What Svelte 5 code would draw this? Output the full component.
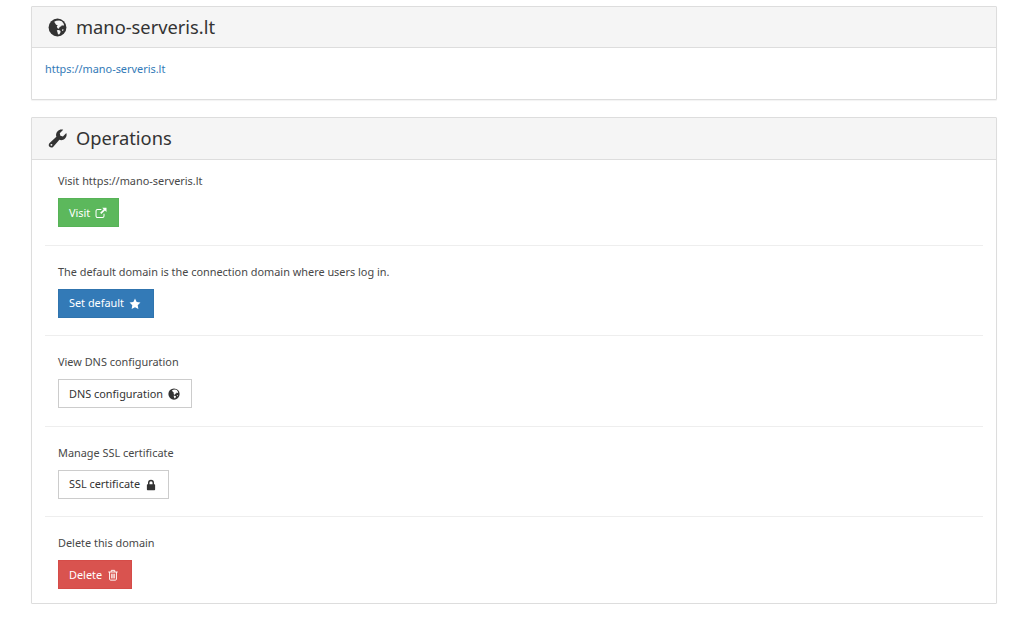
<script>
  const globe = "M8 0.500a7.500 7.500 0 1 0 0 15a7.500 7.500 0 0 0 0-15z";
</script>

{#snippet globeIcon(cls)}
  <svg class={cls} viewBox="0 0 16 16" aria-hidden="true">
    <path fill="currentColor" d={globe} />
    <path class="land" d="M5.200 3.200 7 2.300 9.400 2 11.600 2.700 13 4.400 13.600 6.200 12.400 6.600 11.800 5.800 11.200 7 9.800 7.600 9.200 9 8 8.600 7.400 7.200 8.200 6.200 6.800 5.600 6 4.400zM7.400 10.400 9.200 10.200 10.600 11 10.400 12.400 9.400 13.800 8.400 13.600 8 12zM12 9.400 13.200 9.600 12.600 11 11.800 10.600z" />
  </svg>
{/snippet}

<div class="page">
  <section class="panel">
    <header class="heading">
      {@render globeIcon("head-icon")}
      <h2>mano-serveris.lt</h2>
    </header>
    <div class="body first">
      <a href="#top">https://mano-serveris.lt</a>
    </div>
  </section>

  <section class="panel">
    <header class="heading tall">
      <svg class="head-icon wrench" viewBox="0 0 20 20" aria-hidden="true">
        <path fill="currentColor" d="M19.300 4.200c.7 2.100.2 4.300-1.400 5.900-1.600 1.600-3.900 2-5.900 1.300L5.600 18.600c-1.100 1.200-2.900 1.200-4 .1s-1.100-2.900.1-4L8.800 8.200C8.100 6.200 8.500 3.900 10.100 2.300 11.700.7 14 .2 16 .9L12.400 4.500l.6 2.700 2.700.6z" />
        <circle cx="3.600" cy="16.700" r="1" fill="#f5f5f5" />
      </svg>
      <h2>Operations</h2>
    </header>
    <div class="ops">
      <div class="op">
        <p>Visit https://mano-serveris.lt</p>
        <button class="btn green">Visit
          <svg viewBox="0 0 14 14" aria-hidden="true">
            <path fill="none" stroke="currentColor" stroke-width="1.200" d="M10.500 7.800v2.700a1.700 1.700 0 0 1-1.700 1.700H2.900a1.700 1.700 0 0 1-1.700-1.700V4.600a1.700 1.700 0 0 1 1.700-1.700h4.500" />
            <path fill="currentColor" d="M8.400.8H13.400V5.800L11.600 4 7.400 8.200 6 6.800 10.200 2.600z" />
          </svg>
        </button>
      </div>
      <div class="op">
        <p>The default domain is the connection domain where users log in.</p>
        <button class="btn blue">Set default
          <svg viewBox="0 0 14 14" aria-hidden="true">
            <path fill="currentColor" d="M7 .7l1.950 4 4.400.6-3.200 3.100.78 4.400L7 10.700l-3.930 2.100.78-4.400-3.200-3.100 4.400-.6z" />
          </svg>
        </button>
      </div>
      <div class="op">
        <p>View DNS configuration</p>
        <button class="btn plain">DNS configuration
          {@render globeIcon("")}
        </button>
      </div>
      <div class="op">
        <p>Manage SSL certificate</p>
        <button class="btn plain">SSL certificate
          <svg viewBox="0 0 14 14" aria-hidden="true">
            <path fill="currentColor" fill-rule="evenodd" d="M3.500 6V4.300a3.500 3.500 0 0 1 7 0V6h.5a.8.8 0 0 1 .8.8v5.400a.8.8 0 0 1-.8.8H3a.8.8 0 0 1-.8-.8V6.800A.8.8 0 0 1 3 6zM5.200 6h3.600V4.300a1.800 1.800 0 0 0-3.600 0z" />
          </svg>
        </button>
      </div>
      <div class="op">
        <p>Delete this domain</p>
        <button class="btn red">Delete
          <svg viewBox="0 0 14 14" aria-hidden="true">
            <path fill="none" stroke="currentColor" stroke-width="1.100" d="M1.500 3.500h11M3 3.500v8.300a1.200 1.200 0 0 0 1.200 1.200h5.600a1.200 1.200 0 0 0 1.200-1.200V3.500M5 3.300V1.600h4v1.700M5.500 5.500v5.500M7 5.500v5.500M8.500 5.500v5.500" />
          </svg>
        </button>
      </div>
    </div>
  </section>
</div>

<style>
  :global(body) {
    margin: 0;
    background: #fff;
    font-family: "Noto Sans", "Open Sans", sans-serif;
    font-size: 10.900px;
    color: #484848;
  }
  .page {
    padding: 6px 27px 0 31px;
    display: flex;
    flex-direction: column;
    gap: 17px;
  }
  .panel {
    border: 1px solid #ddd;
    border-radius: 1px;
    box-shadow: 0 1px 1px rgba(0, 0, 0, 0.05);
    background: #fff;
  }
  .heading {
    height: 41px;
    box-sizing: border-box;
    display: flex;
    align-items: center;
    gap: 9px;
    padding-left: 16px;
    background: #f5f5f5;
    border-bottom: 1px solid #ddd;
    color: #333;
  }
  .heading.tall {
    height: 42px;
  }
  h2 {
    margin: 0;
    font-size: 18.300px;
    font-weight: 400;
    line-height: 1;
  }
  .head-icon {
    width: 19px;
    height: 19px;
    flex: none;
  }
  .land {
    fill: #f5f5f5;
  }
  .body.first {
    height: 51px;
    box-sizing: border-box;
    padding: 13px 13px 0;
  }
  a {
    color: #337ab7;
    text-decoration: none;
  }
  .ops {
    padding: 0 13px;
  }
  .op {
    padding: 17px 13px 17.600px;
    border-bottom: 1px solid #eee;
  }
  .op:first-child {
    padding-top: 12px;
  }
  .op:last-child {
    border-bottom: 0;
    padding-bottom: 14px;
  }
  p {
    margin: 0 0 9px;
    line-height: 17px;
  }
  .btn {
    display: inline-flex;
    align-items: center;
    gap: 5px;
    height: 29px;
    box-sizing: border-box;
    padding: 1px 11px 0 10px;
    border: 1px solid transparent;
    border-radius: 0;
    font: inherit;
    line-height: 1;
    vertical-align: top;
  }
  .btn svg {
    width: 12px;
    height: 12px;
    flex: none;
  }
  .btn :global(.land) {
    fill: #fff;
  }
  .green {
    background: #5cb85c;
    border-color: #57b357;
    color: #fff;
  }
  .blue {
    background: #337ab7;
    border-color: #3074ae;
    color: #fff;
    padding-right: 12px;
  }
  .plain {
    background: #fff;
    border-color: #ccc;
    color: #333;
  }
  .red {
    background: #d9534f;
    border-color: #d54c48;
    color: #fff;
    padding-right: 12px;
  }
</style>
